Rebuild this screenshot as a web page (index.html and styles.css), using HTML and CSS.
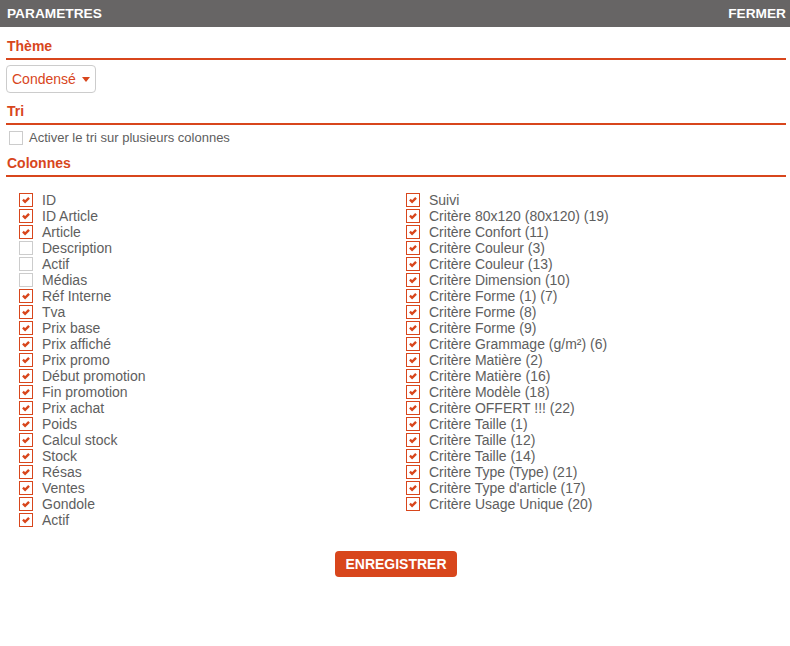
FILE: index.html
```html
<!DOCTYPE html>
<html lang="fr">
<head>
<meta charset="utf-8">
<title>Paramètres</title>
<link rel="stylesheet" href="styles.css">
</head>
<body>
<div class="header">
  <span class="header-title">PARAMETRES</span>
  <span class="header-close">FERMER</span>
</div>
<div class="content">
  <div class="section-title">Thème</div>
  <div class="select"><span>Condensé</span><span class="caret"></span></div>

  <div class="section-title tight">Tri</div>
  <label class="tri-row"><span class="box"></span><span>Activer le tri sur plusieurs colonnes</span></label>

  <div class="section-title tight">Colonnes</div>
  <div class="columns">
    <div class="col">
      <div class="item"><span class="box on"><svg viewBox="0 0 13 13"><path d="M3.2 6.2 L5.5 8.4 L9.8 4.2"/></svg></span><span>ID</span></div>
      <div class="item"><span class="box on"><svg viewBox="0 0 13 13"><path d="M3.2 6.2 L5.5 8.4 L9.8 4.2"/></svg></span><span>ID Article</span></div>
      <div class="item"><span class="box on"><svg viewBox="0 0 13 13"><path d="M3.2 6.2 L5.5 8.4 L9.8 4.2"/></svg></span><span>Article</span></div>
      <div class="item"><span class="box"></span><span>Description</span></div>
      <div class="item"><span class="box"></span><span>Actif</span></div>
      <div class="item"><span class="box"></span><span>Médias</span></div>
      <div class="item"><span class="box on"><svg viewBox="0 0 13 13"><path d="M3.2 6.2 L5.5 8.4 L9.8 4.2"/></svg></span><span>Réf Interne</span></div>
      <div class="item"><span class="box on"><svg viewBox="0 0 13 13"><path d="M3.2 6.2 L5.5 8.4 L9.8 4.2"/></svg></span><span>Tva</span></div>
      <div class="item"><span class="box on"><svg viewBox="0 0 13 13"><path d="M3.2 6.2 L5.5 8.4 L9.8 4.2"/></svg></span><span>Prix base</span></div>
      <div class="item"><span class="box on"><svg viewBox="0 0 13 13"><path d="M3.2 6.2 L5.5 8.4 L9.8 4.2"/></svg></span><span>Prix affiché</span></div>
      <div class="item"><span class="box on"><svg viewBox="0 0 13 13"><path d="M3.2 6.2 L5.5 8.4 L9.8 4.2"/></svg></span><span>Prix promo</span></div>
      <div class="item"><span class="box on"><svg viewBox="0 0 13 13"><path d="M3.2 6.2 L5.5 8.4 L9.8 4.2"/></svg></span><span>Début promotion</span></div>
      <div class="item"><span class="box on"><svg viewBox="0 0 13 13"><path d="M3.2 6.2 L5.5 8.4 L9.8 4.2"/></svg></span><span>Fin promotion</span></div>
      <div class="item"><span class="box on"><svg viewBox="0 0 13 13"><path d="M3.2 6.2 L5.5 8.4 L9.8 4.2"/></svg></span><span>Prix achat</span></div>
      <div class="item"><span class="box on"><svg viewBox="0 0 13 13"><path d="M3.2 6.2 L5.5 8.4 L9.8 4.2"/></svg></span><span>Poids</span></div>
      <div class="item"><span class="box on"><svg viewBox="0 0 13 13"><path d="M3.2 6.2 L5.5 8.4 L9.8 4.2"/></svg></span><span>Calcul stock</span></div>
      <div class="item"><span class="box on"><svg viewBox="0 0 13 13"><path d="M3.2 6.2 L5.5 8.4 L9.8 4.2"/></svg></span><span>Stock</span></div>
      <div class="item"><span class="box on"><svg viewBox="0 0 13 13"><path d="M3.2 6.2 L5.5 8.4 L9.8 4.2"/></svg></span><span>Résas</span></div>
      <div class="item"><span class="box on"><svg viewBox="0 0 13 13"><path d="M3.2 6.2 L5.5 8.4 L9.8 4.2"/></svg></span><span>Ventes</span></div>
      <div class="item"><span class="box on"><svg viewBox="0 0 13 13"><path d="M3.2 6.2 L5.5 8.4 L9.8 4.2"/></svg></span><span>Gondole</span></div>
      <div class="item"><span class="box on"><svg viewBox="0 0 13 13"><path d="M3.2 6.2 L5.5 8.4 L9.8 4.2"/></svg></span><span>Actif</span></div>
    </div>
    <div class="col">
      <div class="item"><span class="box on"><svg viewBox="0 0 13 13"><path d="M3.2 6.2 L5.5 8.4 L9.8 4.2"/></svg></span><span>Suivi</span></div>
      <div class="item"><span class="box on"><svg viewBox="0 0 13 13"><path d="M3.2 6.2 L5.5 8.4 L9.8 4.2"/></svg></span><span>Critère 80x120 (80x120) (19)</span></div>
      <div class="item"><span class="box on"><svg viewBox="0 0 13 13"><path d="M3.2 6.2 L5.5 8.4 L9.8 4.2"/></svg></span><span>Critère Confort (11)</span></div>
      <div class="item"><span class="box on"><svg viewBox="0 0 13 13"><path d="M3.2 6.2 L5.5 8.4 L9.8 4.2"/></svg></span><span>Critère Couleur (3)</span></div>
      <div class="item"><span class="box on"><svg viewBox="0 0 13 13"><path d="M3.2 6.2 L5.5 8.4 L9.8 4.2"/></svg></span><span>Critère Couleur (13)</span></div>
      <div class="item"><span class="box on"><svg viewBox="0 0 13 13"><path d="M3.2 6.2 L5.5 8.4 L9.8 4.2"/></svg></span><span>Critère Dimension (10)</span></div>
      <div class="item"><span class="box on"><svg viewBox="0 0 13 13"><path d="M3.2 6.2 L5.5 8.4 L9.8 4.2"/></svg></span><span>Critère Forme (1) (7)</span></div>
      <div class="item"><span class="box on"><svg viewBox="0 0 13 13"><path d="M3.2 6.2 L5.5 8.4 L9.8 4.2"/></svg></span><span>Critère Forme (8)</span></div>
      <div class="item"><span class="box on"><svg viewBox="0 0 13 13"><path d="M3.2 6.2 L5.5 8.4 L9.8 4.2"/></svg></span><span>Critère Forme (9)</span></div>
      <div class="item"><span class="box on"><svg viewBox="0 0 13 13"><path d="M3.2 6.2 L5.5 8.4 L9.8 4.2"/></svg></span><span>Critère Grammage (g/m²) (6)</span></div>
      <div class="item"><span class="box on"><svg viewBox="0 0 13 13"><path d="M3.2 6.2 L5.5 8.4 L9.8 4.2"/></svg></span><span>Critère Matière (2)</span></div>
      <div class="item"><span class="box on"><svg viewBox="0 0 13 13"><path d="M3.2 6.2 L5.5 8.4 L9.8 4.2"/></svg></span><span>Critère Matière (16)</span></div>
      <div class="item"><span class="box on"><svg viewBox="0 0 13 13"><path d="M3.2 6.2 L5.5 8.4 L9.8 4.2"/></svg></span><span>Critère Modèle (18)</span></div>
      <div class="item"><span class="box on"><svg viewBox="0 0 13 13"><path d="M3.2 6.2 L5.5 8.4 L9.8 4.2"/></svg></span><span>Critère OFFERT !!! (22)</span></div>
      <div class="item"><span class="box on"><svg viewBox="0 0 13 13"><path d="M3.2 6.2 L5.5 8.4 L9.8 4.2"/></svg></span><span>Critère Taille (1)</span></div>
      <div class="item"><span class="box on"><svg viewBox="0 0 13 13"><path d="M3.2 6.2 L5.5 8.4 L9.8 4.2"/></svg></span><span>Critère Taille (12)</span></div>
      <div class="item"><span class="box on"><svg viewBox="0 0 13 13"><path d="M3.2 6.2 L5.5 8.4 L9.8 4.2"/></svg></span><span>Critère Taille (14)</span></div>
      <div class="item"><span class="box on"><svg viewBox="0 0 13 13"><path d="M3.2 6.2 L5.5 8.4 L9.8 4.2"/></svg></span><span>Critère Type (Type) (21)</span></div>
      <div class="item"><span class="box on"><svg viewBox="0 0 13 13"><path d="M3.2 6.2 L5.5 8.4 L9.8 4.2"/></svg></span><span>Critère Type d'article (17)</span></div>
      <div class="item"><span class="box on"><svg viewBox="0 0 13 13"><path d="M3.2 6.2 L5.5 8.4 L9.8 4.2"/></svg></span><span>Critère Usage Unique (20)</span></div>
    </div>
  </div>
  <div class="actions"><button class="save">ENREGISTRER</button></div>
</div>
</body>
</html>
```
FILE: styles.css
```css
* { box-sizing: border-box; }
html, body { margin: 0; padding: 0; background: #fff; }
body { font-family: "Liberation Sans", Arial, sans-serif; color: #5e5e5e; }

.header {
  height: 27px;
  background: #676565;
  color: #fff;
  font-weight: bold;
  font-size: 13.7px;
  display: flex;
  align-items: center;
  justify-content: space-between;
  padding: 0 4px 0 7px;
}

.content { padding: 0 4px 0 6px; }

.section-title {
  color: #d8461c;
  font-weight: bold;
  font-size: 14px;
  line-height: 16px;
  padding: 0 0 4px 1px;
  border-bottom: 2px solid #d8461c;
  margin-top: 11px;
}
.section-title.tight { margin-top: 10px; }

.select {
  display: inline-flex;
  align-items: center;
  margin-top: 5px;
  height: 28px;
  padding: 0 5px 0 5px;
  border: 1px solid #ccc;
  border-radius: 4px;
  color: #d8461c;
  font-size: 14px;
  gap: 6px;
}
.caret {
  width: 0; height: 0;
  border-left: 4.5px solid transparent;
  border-right: 4.5px solid transparent;
  border-top: 5px solid #d8461c;
  margin-top: 1px;
}

.tri-row {
  display: flex;
  align-items: center;
  gap: 6px;
  margin-top: 5px;
  padding-left: 3px;
  height: 15px;
  font-size: 13px;
}

.box {
  width: 14px;
  height: 14px;
  border: 1px solid #ccc;
  flex: none;
  display: inline-flex;
}
.box.on { border-color: #d8461c; }
.box svg { width: 12px; height: 12px; overflow: visible; }
.box svg path { fill: none; stroke: #d8461c; stroke-width: 2.6; stroke-linecap: butt; }

.columns {
  display: grid;
  grid-template-columns: 387px 1fr;
  padding-left: 13px;
  margin-top: 15px;
}
.item {
  display: flex;
  align-items: center;
  height: 16px;
  gap: 9px;
  font-size: 14px;
}

.actions {
  display: flex;
  justify-content: center;
  margin-top: 23px;
}
.save {
  font-family: "Liberation Sans", Arial, sans-serif;
  background: #d8461c;
  color: #fff;
  border: 0;
  border-radius: 4px;
  font-weight: bold;
  font-size: 14px;
  height: 26px;
  padding: 0 10.5px;
}
```
